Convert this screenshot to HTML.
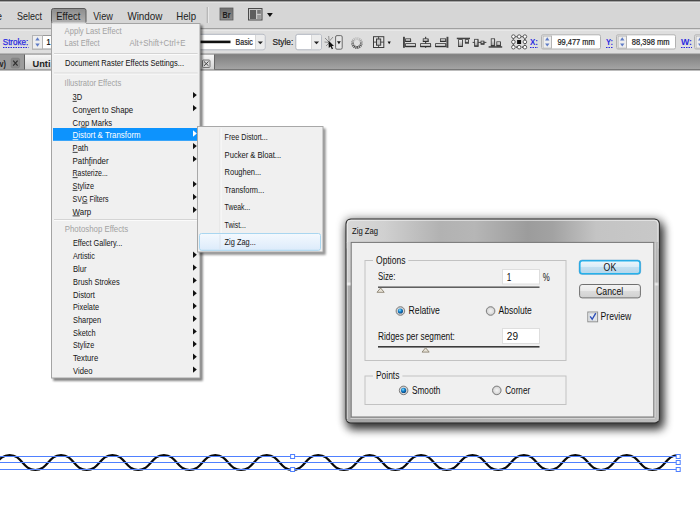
<!DOCTYPE html>
<html><head><meta charset="utf-8"><title>Zig Zag</title>
<style>html,body{margin:0;padding:0;background:#fff;overflow:hidden}svg{display:block}text{font-family:'Liberation Sans', sans-serif;white-space:pre}</style>
</head><body>
<svg width="700" height="506" viewBox="0 0 700 506">
<defs>
<linearGradient id="tabbar" x1="0" y1="0" x2="0" y2="1"><stop offset="0" stop-color="#7e7e7e"/><stop offset="1" stop-color="#a6a6a6"/></linearGradient>
<linearGradient id="acttab" x1="0" y1="0" x2="0" y2="1"><stop offset="0" stop-color="#d8d8d8"/><stop offset="1" stop-color="#cdcdcd"/></linearGradient>
<linearGradient id="effbtn" x1="0" y1="0" x2="0" y2="1"><stop offset="0" stop-color="#8c8c8c"/><stop offset="1" stop-color="#b4b4b4"/></linearGradient>
<linearGradient id="brbtn" x1="0" y1="0" x2="0" y2="1"><stop offset="0" stop-color="#6e6e6e"/><stop offset="1" stop-color="#8a8a8a"/></linearGradient>
<linearGradient id="title" x1="0" y1="0" x2="1" y2="0"><stop offset="0" stop-color="#d8d8d8"/><stop offset="0.12" stop-color="#d0d0d0"/><stop offset="0.3" stop-color="#b2b2b2"/><stop offset="0.41" stop-color="#b6b6b6"/><stop offset="0.58" stop-color="#9c9c9c"/><stop offset="0.66" stop-color="#a2a2a2"/><stop offset="0.8" stop-color="#c4c4c4"/><stop offset="1" stop-color="#c8c8c8"/></linearGradient>
<linearGradient id="okbtn" x1="0" y1="0" x2="0" y2="1"><stop offset="0" stop-color="#eef7fc"/><stop offset="0.5" stop-color="#d9ecf7"/><stop offset="0.5" stop-color="#c3e0f1"/><stop offset="1" stop-color="#b5d6ea"/></linearGradient>
<linearGradient id="cbtn" x1="0" y1="0" x2="0" y2="1"><stop offset="0" stop-color="#f4f4f4"/><stop offset="0.5" stop-color="#e9e9e9"/><stop offset="0.5" stop-color="#dcdcdc"/><stop offset="1" stop-color="#d0d0d0"/></linearGradient>
<linearGradient id="hl" x1="0" y1="0" x2="0" y2="1"><stop offset="0" stop-color="#f4f9fe"/><stop offset="1" stop-color="#dcebfb"/></linearGradient>
<radialGradient id="radio" cx="0.5" cy="0.5" r="0.5"><stop offset="0" stop-color="#f4f4f4"/><stop offset="0.7" stop-color="#dcdcdc"/><stop offset="1" stop-color="#b8b8b8"/></radialGradient>
<radialGradient id="dot" cx="0.4" cy="0.35" r="0.7"><stop offset="0" stop-color="#8fe0ff"/><stop offset="0.45" stop-color="#1583cc"/><stop offset="1" stop-color="#073f7a"/></radialGradient>
<filter id="b2" x="-20%" y="-20%" width="140%" height="140%"><feGaussianBlur stdDeviation="0.9"/></filter>
<filter id="b5" x="-20%" y="-20%" width="140%" height="140%"><feGaussianBlur stdDeviation="4.6"/></filter>
<linearGradient id="acttab2" x1="0" y1="0" x2="0" y2="1"><stop offset="0" stop-color="#f8f8f8"/><stop offset="1" stop-color="#d2d2d2"/></linearGradient><linearGradient id="ibox" x1="0" y1="0" x2="0" y2="1"><stop offset="0" stop-color="#f2f2f2"/><stop offset="1" stop-color="#9c9c9c"/></linearGradient><linearGradient id="lframe" x1="0" y1="0" x2="0" y2="1"><stop offset="0" stop-color="#d2d2d2"/><stop offset="0.222" stop-color="#cecece"/><stop offset="0.235" stop-color="#f6f6f6"/><stop offset="0.248" stop-color="#aeaeae"/><stop offset="1" stop-color="#acacac"/></linearGradient><linearGradient id="rframe" x1="0" y1="0" x2="0" y2="1"><stop offset="0" stop-color="#b8b8b8"/><stop offset="0.222" stop-color="#b0b0b0"/><stop offset="0.235" stop-color="#f0f0f0"/><stop offset="0.248" stop-color="#c2c2c2"/><stop offset="1" stop-color="#bcbcbc"/></linearGradient><linearGradient id="bframe" x1="0" y1="0" x2="1" y2="0"><stop offset="0" stop-color="#a4a4a4"/><stop offset="0.5" stop-color="#b4b4b4"/><stop offset="1" stop-color="#bcbcbc"/></linearGradient></defs>
<rect x="0" y="0" width="700" height="506" fill="#ffffff" />
<rect x="0" y="0" width="700" height="29" fill="#d6d6d6" />
<rect x="0" y="0" width="700" height="1" fill="#4a4a4a" />
<rect x="0" y="1" width="700" height="1" fill="#a4a4a4" />
<rect x="0" y="2" width="700" height="1" fill="#e2e2e2" />
<rect x="0" y="29" width="700" height="25" fill="#dedede" />
<rect x="0" y="28.4" width="700" height="1" fill="#7c7c7c" />
<rect x="0" y="29.4" width="700" height="1.2" fill="#eeeeee" />
<rect x="0" y="54" width="700" height="16" fill="url(#tabbar)" />
<rect x="0" y="53.5" width="700" height="1" fill="#8c8c8c" />
<rect x="0" y="69.4" width="700" height="1" fill="#5a5a5a" />
<rect x="0" y="54.5" width="24.5" height="15" fill="#9c9c9c" />
<text x="-0.4" y="66.5" font-size="9.4" fill="#222" font-weight="bold" textLength="6.4" lengthAdjust="spacingAndGlyphs" >v)</text>
<rect x="11.2" y="58.2" width="8.4" height="9.6" fill="#878787" rx="1.5" stroke="#7a7a7a" stroke-width="0.6"/>
<path d="M13.2 60.6 L17.6 65.6 M17.6 60.6 L13.2 65.6" stroke="#2e2e2e" stroke-width="1.2" fill="none"/>
<rect x="24.5" y="54.6" width="190" height="14.9" fill="url(#acttab2)" />
<rect x="214" y="54.5" width="1" height="15" fill="#666" />
<rect x="24" y="54.5" width="0.9" height="15" fill="#555" />
<text x="32.5" y="66.5" font-size="9.6" fill="#222" font-weight="bold" textLength="18" lengthAdjust="spacingAndGlyphs" >Unti</text>
<rect x="202.5" y="60" width="7.5" height="7.5" fill="#d8d8d8" stroke="#777" stroke-width="1" rx="1"/>
<path d="M204 61.5 L208.5 65.8 M208.5 61.5 L204 65.8" stroke="#444" stroke-width="1" fill="none"/>
<text x="-3.5" y="19.5" font-size="10.3" fill="#222" font-weight="normal" textLength="5.5" lengthAdjust="spacingAndGlyphs" >e</text>
<text x="17" y="19.5" font-size="10.3" fill="#222" font-weight="normal" textLength="25" lengthAdjust="spacingAndGlyphs" >Select</text>
<rect x="51.5" y="8.5" width="34.5" height="15" fill="url(#effbtn)" stroke="#5a5a5a" stroke-width="1" rx="2"/>
<text x="56.3" y="19.5" font-size="10.3" fill="#1a1a1a" font-weight="normal" textLength="24" lengthAdjust="spacingAndGlyphs" >Effect</text>
<text x="93.2" y="19.5" font-size="10.3" fill="#222" font-weight="normal" textLength="19.6" lengthAdjust="spacingAndGlyphs" >View</text>
<text x="127.4" y="19.5" font-size="10.3" fill="#222" font-weight="normal" textLength="35" lengthAdjust="spacingAndGlyphs" >Window</text>
<text x="176.2" y="19.5" font-size="10.3" fill="#222" font-weight="normal" textLength="19.8" lengthAdjust="spacingAndGlyphs" >Help</text>
<rect x="206.8" y="7" width="1" height="16" fill="#a2a2a2" />
<rect x="207.8" y="7" width="1" height="16" fill="#ececec" />
<rect x="220" y="8" width="13" height="12" fill="url(#brbtn)" stroke="#5c5c5c" stroke-width="0.8"/>
<text x="222.6" y="17.6" font-size="8.5" fill="#1c1c1c" font-weight="bold" textLength="8" lengthAdjust="spacingAndGlyphs" >Br</text>
<rect x="248.5" y="8.5" width="13.5" height="11.5" fill="#c9c9c9" stroke="#4a4a4a" stroke-width="1"/>
<rect x="250" y="10" width="6" height="9" fill="#5e5e5e" />
<rect x="257.2" y="10" width="3.6" height="3.8" fill="#777" />
<rect x="257.2" y="15" width="3.6" height="4" fill="#999" />
<path d="M267 13 L272.8 13 L269.9 17 Z" fill="#111"/>
<text x="2.8" y="44.7" font-size="8.4" fill="#2a2ae0" font-weight="normal" textLength="25.4" lengthAdjust="spacingAndGlyphs" stroke="#2a2ae0" stroke-width="0.25">Stroke:</text>
<line x1="3" y1="47.5" x2="28.5" y2="47.5" stroke="#2a2ae0" stroke-width="1" stroke-dasharray="1.5 1"/>
<rect x="32.5" y="35.5" width="30" height="13.5" fill="#ffffff" stroke="#9a9a9a" stroke-width="1"/>
<rect x="32.5" y="35.5" width="10" height="13.5" fill="#eeeeee" stroke="#b4b4b4" stroke-width="1"/>
<path d="M35.3 40.55 L39.7 40.55 L37.5 37.35 Z" fill="#5f7cc6"/>
<path d="M35.3 43.55 L39.7 43.55 L37.5 46.75 Z" fill="#5f7cc6"/>
<text x="46.6" y="44.6" font-size="9.5" fill="#222" font-weight="bold" textLength="4" lengthAdjust="spacingAndGlyphs" >1</text>
<rect x="196" y="34.3" width="69" height="15.5" fill="#ffffff" stroke="#b0b4be" stroke-width="1" rx="2"/>
<rect x="255.6" y="34.9" width="8.800000000000006" height="14.3" fill="#ececec" />
<rect x="255.2" y="34.9" width="0.8" height="14.3" fill="#d0d0d0" />
<path d="M257.7 41.449999999999996 L262.90000000000003 41.449999999999996 L260.3 44.25 Z" fill="#222"/>
<rect x="200" y="40.6" width="30.5" height="2.6" fill="#111" />
<text x="235.6" y="44.7" font-size="8.2" fill="#222" font-weight="normal" textLength="17.2" lengthAdjust="spacingAndGlyphs" stroke="#222" stroke-width="0.2">Basic</text>
<text x="272.6" y="44.7" font-size="8.4" fill="#222" font-weight="normal" textLength="20.6" lengthAdjust="spacingAndGlyphs" stroke="#222" stroke-width="0.2">Style:</text>
<rect x="295.8" y="34.3" width="25.599999999999966" height="15.5" fill="#ffffff" stroke="#b0b4be" stroke-width="1" rx="2"/>
<rect x="311.6" y="34.9" width="9.199999999999955" height="14.3" fill="#ececec" />
<rect x="311.20000000000005" y="34.9" width="0.8" height="14.3" fill="#d0d0d0" />
<path d="M313.9 41.449999999999996 L319.1 41.449999999999996 L316.5 44.25 Z" fill="#222"/>
<g stroke="#7a7a7a" stroke-width="0.8" fill="none"><path d="M325 38 L329 42 M333 37 L329.5 41 M326 46 L329 43 M328.7 36 L329 40 M324.5 42 L328 42.3"/></g>
<path d="M328.5 40.5 L334 46 L331.8 46 L333 48.8 L331.8 49.2 L330.6 46.5 L328.8 48 Z" fill="#111"/>
<rect x="335.6" y="35.6" width="6.6" height="13.6" fill="#e6e6e6" stroke="#6a6a6a" stroke-width="1" rx="1.4"/>
<path d="M337 41.2 L340.8 41.2 L338.9 44.3 Z" fill="#111"/>
<g transform="translate(356.9,43)"><line x1="3.04" y1="0.62" x2="5.78" y2="1.17" stroke="#6b6b6b" stroke-width="1.05"/><line x1="2.57" y1="1.73" x2="4.89" y2="3.30" stroke="#545454" stroke-width="1.05"/><line x1="1.71" y1="2.58" x2="3.26" y2="4.92" stroke="#424242" stroke-width="1.05"/><line x1="0.59" y1="3.04" x2="1.13" y2="5.79" stroke="#393939" stroke-width="1.05"/><line x1="-0.62" y1="3.04" x2="-1.17" y2="5.78" stroke="#393939" stroke-width="1.05"/><line x1="-1.73" y1="2.57" x2="-3.30" y2="4.89" stroke="#424242" stroke-width="1.05"/><line x1="-2.58" y1="1.71" x2="-4.92" y2="3.26" stroke="#545454" stroke-width="1.05"/><line x1="-3.04" y1="0.59" x2="-5.79" y2="1.13" stroke="#6b6b6b" stroke-width="1.05"/><line x1="-3.04" y1="-0.62" x2="-5.78" y2="-1.17" stroke="#868686" stroke-width="1.05"/><line x1="-2.57" y1="-1.73" x2="-4.89" y2="-3.30" stroke="#a0a0a0" stroke-width="1.05"/><line x1="-1.71" y1="-2.58" x2="-3.26" y2="-4.92" stroke="#b4b4b4" stroke-width="1.05"/><line x1="-0.59" y1="-3.04" x2="-1.13" y2="-5.79" stroke="#bebebe" stroke-width="1.05"/><line x1="0.62" y1="-3.04" x2="1.17" y2="-5.78" stroke="#bebebe" stroke-width="1.05"/><line x1="1.73" y1="-2.57" x2="3.30" y2="-4.89" stroke="#b3b3b3" stroke-width="1.05"/><line x1="2.58" y1="-1.71" x2="4.92" y2="-3.26" stroke="#9f9f9f" stroke-width="1.05"/><line x1="3.04" y1="-0.59" x2="5.79" y2="-1.13" stroke="#858585" stroke-width="1.05"/></g>
<rect x="373.5" y="36.7" width="10.3" height="10.8" fill="#e4e4e4" stroke="#3c3c3c" stroke-width="1"/>
<line x1="378.6" y1="36.7" x2="378.6" y2="47.5" stroke="#3c3c3c" stroke-width="0.9" />
<line x1="373.5" y1="42.1" x2="383.8" y2="42.1" stroke="#3c3c3c" stroke-width="0.9" />
<rect x="376.5" y="39" width="4.2" height="6.2" fill="#c6c6c6" stroke="#3c3c3c" stroke-width="1"/>
<path d="M387.6 41.5 L390.8 41.5 L389.2 44.2 Z" fill="#111"/>
<rect x="403" y="36.8" width="1.9" height="11" fill="#444" />
<rect x="405.6" y="38.8" width="5" height="2.6" fill="url(#ibox)" stroke="#3a3a3a" stroke-width="0.8"/>
<rect x="405.3" y="40.9" width="5.8" height="1.1" fill="#2e2e2e" />
<rect x="410.20000000000005" y="39.099999999999994" width="0.9" height="2.6" fill="#4a4a4a" />
<rect x="405.6" y="43.6" width="9.8" height="3" fill="url(#ibox)" stroke="#3a3a3a" stroke-width="0.8"/>
<rect x="405.3" y="46.1" width="10.600000000000001" height="1.1" fill="#2e2e2e" />
<rect x="415.00000000000006" y="43.9" width="0.9" height="3" fill="#4a4a4a" />
<rect x="425" y="36.8" width="1.2" height="11" fill="#444" />
<rect x="423.2" y="38.8" width="4.9" height="2.6" fill="url(#ibox)" stroke="#3a3a3a" stroke-width="0.8"/>
<rect x="422.9" y="40.9" width="5.7" height="1.1" fill="#2e2e2e" />
<rect x="427.7" y="39.099999999999994" width="0.9" height="2.6" fill="#4a4a4a" />
<rect x="420.6" y="43.6" width="10" height="3" fill="url(#ibox)" stroke="#3a3a3a" stroke-width="0.8"/>
<rect x="420.3" y="46.1" width="10.8" height="1.1" fill="#2e2e2e" />
<rect x="430.20000000000005" y="43.9" width="0.9" height="3" fill="#4a4a4a" />
<rect x="446.5" y="36.8" width="1.9" height="11" fill="#444" />
<rect x="440.4" y="38.8" width="5.3" height="2.6" fill="url(#ibox)" stroke="#3a3a3a" stroke-width="0.8"/>
<rect x="440.09999999999997" y="40.9" width="6.1" height="1.1" fill="#2e2e2e" />
<rect x="445.3" y="39.099999999999994" width="0.9" height="2.6" fill="#4a4a4a" />
<rect x="435.6" y="43.6" width="10.2" height="3" fill="url(#ibox)" stroke="#3a3a3a" stroke-width="0.8"/>
<rect x="435.3" y="46.1" width="11.0" height="1.1" fill="#2e2e2e" />
<rect x="445.40000000000003" y="43.9" width="0.9" height="3" fill="#4a4a4a" />
<rect x="456.8" y="37.7" width="13.2" height="1.5" fill="#444" />
<rect x="458.6" y="39.6" width="3.8" height="6.8" fill="url(#ibox)" stroke="#3a3a3a" stroke-width="0.8"/>
<rect x="458.3" y="45.9" width="4.6" height="1.1" fill="#2e2e2e" />
<rect x="462.00000000000006" y="39.9" width="0.9" height="6.8" fill="#4a4a4a" />
<rect x="465.3" y="39.6" width="3.2" height="3.3" fill="url(#ibox)" stroke="#3a3a3a" stroke-width="0.8"/>
<rect x="465.0" y="42.4" width="4.0" height="1.1" fill="#2e2e2e" />
<rect x="468.1" y="39.9" width="0.9" height="3.3" fill="#4a4a4a" />
<rect x="472.6" y="41.9" width="13.8" height="1.0" fill="#444" />
<rect x="474.6" y="39.3" width="3.4" height="6.8" fill="url(#ibox)" stroke="#3a3a3a" stroke-width="0.8"/>
<rect x="474.3" y="45.599999999999994" width="4.2" height="1.1" fill="#2e2e2e" />
<rect x="477.6" y="39.599999999999994" width="0.9" height="6.8" fill="#4a4a4a" />
<rect x="481" y="41.1" width="2.9" height="2.9" fill="url(#ibox)" stroke="#3a3a3a" stroke-width="0.8"/>
<rect x="480.7" y="43.5" width="3.7" height="1.1" fill="#2e2e2e" />
<rect x="483.5" y="41.4" width="0.9" height="2.9" fill="#4a4a4a" />
<rect x="488.6" y="46.2" width="13.6" height="1.5" fill="#444" />
<rect x="491.2" y="38.8" width="3.4" height="7" fill="url(#ibox)" stroke="#3a3a3a" stroke-width="0.8"/>
<rect x="490.9" y="45.3" width="4.2" height="1.1" fill="#2e2e2e" />
<rect x="494.2" y="39.099999999999994" width="0.9" height="7" fill="#4a4a4a" />
<rect x="496.8" y="41.8" width="3.6" height="4" fill="url(#ibox)" stroke="#3a3a3a" stroke-width="0.8"/>
<rect x="496.5" y="45.3" width="4.4" height="1.1" fill="#2e2e2e" />
<rect x="500.00000000000006" y="42.099999999999994" width="0.9" height="4" fill="#4a4a4a" />
<rect x="513.4" y="36.6" width="11.5" height="10.6" fill="none" stroke="#3a3a3a" stroke-width="1.3" stroke-dasharray="1.2 0.8"/>
<circle cx="513.4" cy="36.6" r="1.8" fill="#fff" stroke="#3a3a3a" stroke-width="0.8"/>
<circle cx="513.4" cy="41.9" r="1.8" fill="#fff" stroke="#3a3a3a" stroke-width="0.8"/>
<circle cx="513.4" cy="47.2" r="1.8" fill="#fff" stroke="#3a3a3a" stroke-width="0.8"/>
<circle cx="519.15" cy="36.6" r="1.8" fill="#fff" stroke="#3a3a3a" stroke-width="0.8"/>
<circle cx="519.15" cy="47.2" r="1.8" fill="#fff" stroke="#3a3a3a" stroke-width="0.8"/>
<circle cx="524.9" cy="36.6" r="1.8" fill="#fff" stroke="#3a3a3a" stroke-width="0.8"/>
<circle cx="524.9" cy="41.9" r="1.8" fill="#fff" stroke="#3a3a3a" stroke-width="0.8"/>
<circle cx="524.9" cy="47.2" r="1.8" fill="#fff" stroke="#3a3a3a" stroke-width="0.8"/>
<rect x="517.1" y="40" width="4" height="4" fill="#111" />
<text x="530" y="44.8" font-size="8.2" fill="#2a2ae0" font-weight="bold" textLength="8" lengthAdjust="spacingAndGlyphs" >X:</text>
<line x1="530" y1="47.5" x2="538" y2="47.5" stroke="#2a2ae0" stroke-width="1" stroke-dasharray="1.5 1"/>
<rect x="541.5" y="34.8" width="59" height="14.2" fill="#fff" stroke="#b2b2b2" stroke-width="1" rx="1.5"/>
<rect x="543.0" y="36.0" width="8.5" height="12.2" fill="#eeeeee" stroke="#b4b4b4" stroke-width="1"/>
<path d="M545.05 40.4 L549.45 40.4 L547.25 37.2 Z" fill="#5f7cc6"/>
<path d="M545.05 43.4 L549.45 43.4 L547.25 46.6 Z" fill="#5f7cc6"/>
<text x="557.4" y="44.8" font-size="8.2" fill="#222" font-weight="normal" textLength="37.4" lengthAdjust="spacingAndGlyphs" stroke="#222" stroke-width="0.2">99,477 mm</text>
<text x="606" y="44.8" font-size="8.2" fill="#2a2ae0" font-weight="bold" textLength="7" lengthAdjust="spacingAndGlyphs" >Y:</text>
<line x1="606" y1="47.5" x2="613" y2="47.5" stroke="#2a2ae0" stroke-width="1" stroke-dasharray="1.5 1"/>
<rect x="616.5" y="34.8" width="59" height="14.2" fill="#fff" stroke="#b2b2b2" stroke-width="1" rx="1.5"/>
<rect x="618.0" y="36.0" width="8.5" height="12.2" fill="#eeeeee" stroke="#b4b4b4" stroke-width="1"/>
<path d="M620.05 40.4 L624.45 40.4 L622.25 37.2 Z" fill="#5f7cc6"/>
<path d="M620.05 43.4 L624.45 43.4 L622.25 46.6 Z" fill="#5f7cc6"/>
<text x="631.8" y="44.8" font-size="8.2" fill="#222" font-weight="normal" textLength="37.8" lengthAdjust="spacingAndGlyphs" stroke="#222" stroke-width="0.2">88,398 mm</text>
<text x="681" y="44.8" font-size="8.2" fill="#2a2ae0" font-weight="bold" textLength="11" lengthAdjust="spacingAndGlyphs" >W:</text>
<line x1="681" y1="47.5" x2="692" y2="47.5" stroke="#2a2ae0" stroke-width="1" stroke-dasharray="1.5 1"/>
<rect x="694.5" y="34.8" width="20" height="14.2" fill="#fff" stroke="#b2b2b2" stroke-width="1" rx="1.5"/>
<rect x="696.0" y="36.0" width="8.5" height="12.2" fill="#eeeeee" stroke="#b4b4b4" stroke-width="1"/>
<path d="M698.05 40.4 L702.45 40.4 L700.25 37.2 Z" fill="#5f7cc6"/>
<path d="M698.05 43.4 L702.45 43.4 L700.25 46.6 Z" fill="#5f7cc6"/>
<path d="M-41.83 455.10 C-28.97 455.10 -28.97 470.00 -16.11 470.00 C-3.26 470.00 -3.26 455.10 9.60 455.10 C22.46 455.10 22.46 470.00 35.31 470.00 C48.17 470.00 48.17 455.10 61.03 455.10 C73.89 455.10 73.89 470.00 86.75 470.00 C99.60 470.00 99.60 455.10 112.46 455.10 C125.32 455.10 125.32 470.00 138.18 470.00 C151.03 470.00 151.03 455.10 163.89 455.10 C176.75 455.10 176.75 470.00 189.61 470.00 C202.46 470.00 202.46 455.10 215.32 455.10 C228.18 455.10 228.18 470.00 241.04 470.00 C253.89 470.00 253.89 455.10 266.75 455.10 C279.61 455.10 279.61 470.00 292.46 470.00 C305.32 470.00 305.32 455.10 318.18 455.10 C331.04 455.10 331.04 470.00 343.89 470.00 C356.75 470.00 356.75 455.10 369.61 455.10 C382.47 455.10 382.47 470.00 395.32 470.00 C408.18 470.00 408.18 455.10 421.04 455.10 C433.90 455.10 433.90 470.00 446.75 470.00 C459.61 470.00 459.61 455.10 472.47 455.10 C485.33 455.10 485.33 470.00 498.18 470.00 C511.04 470.00 511.04 455.10 523.90 455.10 C536.76 455.10 536.76 470.00 549.61 470.00 C562.47 470.00 562.47 455.10 575.33 455.10 C588.19 455.10 588.19 470.00 601.04 470.00 C613.90 470.00 613.90 455.10 626.76 455.10 C639.62 455.10 639.62 470.00 652.47 470.00 C665.33 470.00 665.33 455.10 678.19 455.10" fill="none" stroke="#0a0a0a" stroke-width="2.15"/>
<line x1="0" y1="456.5" x2="678" y2="456.5" stroke="#4f80ff" stroke-width="1" />
<line x1="0" y1="462.5" x2="678" y2="462.5" stroke="#4f80ff" stroke-width="1" />
<line x1="0" y1="469.5" x2="678" y2="469.5" stroke="#4f80ff" stroke-width="1" />
<rect x="290.6" y="454.5" width="4" height="4" fill="#fff" stroke="#4f80ff" stroke-width="1"/>
<rect x="290.6" y="467.5" width="4" height="4" fill="#fff" stroke="#4f80ff" stroke-width="1"/>
<rect x="676.2" y="454.5" width="4" height="4" fill="#fff" stroke="#4f80ff" stroke-width="1"/>
<rect x="676.2" y="460.5" width="4" height="4" fill="#fff" stroke="#4f80ff" stroke-width="1"/>
<rect x="676.2" y="467.5" width="4" height="4" fill="#fff" stroke="#4f80ff" stroke-width="1"/>
<rect x="53.2" y="25.4" width="149.5" height="355.5" fill="#000" opacity="0.5" filter="url(#b2)"/>
<rect x="51.5" y="23.5" width="148.5" height="354.5" fill="#f0f0f0" stroke="#a4a4a4" stroke-width="1"/>
<rect x="52" y="22.5" width="34" height="1.5" fill="#e0e0e0" />
<text x="64.6" y="33.5" font-size="9" fill="#a2a2a2" font-weight="normal" textLength="57" lengthAdjust="spacingAndGlyphs" >Apply Last Effect</text>
<text x="64.6" y="46" font-size="9" fill="#a2a2a2" font-weight="normal" textLength="35" lengthAdjust="spacingAndGlyphs" >Last Effect</text>
<text x="129.6" y="46" font-size="9" fill="#a2a2a2" font-weight="normal" textLength="56" lengthAdjust="spacingAndGlyphs" >Alt+Shift+Ctrl+E</text>
<rect x="54" y="53" width="143.6" height="1" fill="#d4d4d4" />
<rect x="54" y="54" width="143.6" height="1" fill="#fbfbfb" />
<rect x="54" y="72.6" width="143.6" height="1" fill="#d4d4d4" />
<rect x="54" y="73.6" width="143.6" height="1" fill="#fbfbfb" />
<rect x="54" y="219" width="143.6" height="1" fill="#d4d4d4" />
<rect x="54" y="220" width="143.6" height="1" fill="#fbfbfb" />
<text x="65" y="66" font-size="9" fill="#111" font-weight="normal" textLength="119" lengthAdjust="spacingAndGlyphs" >Document Raster Effects Settings...</text>
<text x="64.6" y="85.6" font-size="9" fill="#a2a2a2" font-weight="normal" textLength="56.6" lengthAdjust="spacingAndGlyphs" >Illustrator Effects</text>
<rect x="53" y="128" width="146" height="12.8" fill="#0d93fd" />
<text x="72.6" y="99.9" font-size="9" fill="#151515" font-weight="normal" textLength="9.6" lengthAdjust="spacingAndGlyphs" >3D</text>
<rect x="72.6" y="100.9" width="4.18" height="0.8" fill="#151515" />
<path d="M193 91.9 L196.8 95.10000000000001 L193 98.30000000000001 Z" fill="#111"/>
<text x="72.6" y="112.9" font-size="9" fill="#151515" font-weight="normal" textLength="60.6" lengthAdjust="spacingAndGlyphs" >Convert to Shape</text>
<rect x="86.87" y="113.9" width="3.91" height="0.8" fill="#151515" />
<path d="M193 104.9 L196.8 108.10000000000001 L193 111.30000000000001 Z" fill="#111"/>
<text x="72.6" y="125.7" font-size="9" fill="#151515" font-weight="normal" textLength="39.6" lengthAdjust="spacingAndGlyphs" >Crop Marks</text>
<rect x="80.67" y="126.7" width="4.28" height="0.8" fill="#151515" />
<text x="72.6" y="138.3" font-size="9" fill="#fff" font-weight="normal" textLength="68" lengthAdjust="spacingAndGlyphs" >Distort &amp; Transform</text>
<rect x="72.6" y="139.3" width="5.7" height="0.8" fill="#fff" />
<path d="M193 130.3 L196.8 133.5 L193 136.7 Z" fill="#fff"/>
<text x="72.6" y="150.9" font-size="9" fill="#151515" font-weight="normal" textLength="15.6" lengthAdjust="spacingAndGlyphs" >Path</text>
<rect x="72.6" y="151.9" width="5.07" height="0.8" fill="#151515" />
<path d="M193 142.9 L196.8 146.1 L193 149.29999999999998 Z" fill="#111"/>
<text x="72.6" y="163.7" font-size="9" fill="#151515" font-weight="normal" textLength="36" lengthAdjust="spacingAndGlyphs" >Pathfinder</text>
<rect x="88.83" y="164.7" width="2.21" height="0.8" fill="#151515" />
<path d="M193 155.7 L196.8 158.89999999999998 L193 162.09999999999997 Z" fill="#111"/>
<text x="72.6" y="176.3" font-size="9" fill="#151515" font-weight="normal" textLength="35.2" lengthAdjust="spacingAndGlyphs" >Rasterize...</text>
<rect x="72.6" y="177.3" width="5.03" height="0.8" fill="#151515" />
<text x="72.6" y="188.9" font-size="9" fill="#151515" font-weight="normal" textLength="21.4" lengthAdjust="spacingAndGlyphs" >Stylize</text>
<rect x="72.6" y="189.9" width="4.86" height="0.8" fill="#151515" />
<path d="M193 180.9 L196.8 184.1 L193 187.29999999999998 Z" fill="#111"/>
<text x="72.6" y="201.7" font-size="9" fill="#151515" font-weight="normal" textLength="36" lengthAdjust="spacingAndGlyphs" >SVG Filters</text>
<rect x="81.99" y="202.7" width="5.49" height="0.8" fill="#151515" />
<path d="M193 193.7 L196.8 196.89999999999998 L193 200.09999999999997 Z" fill="#111"/>
<text x="72.6" y="214.5" font-size="9" fill="#151515" font-weight="normal" textLength="18.6" lengthAdjust="spacingAndGlyphs" >Warp</text>
<rect x="72.6" y="215.5" width="7.18" height="0.8" fill="#151515" />
<path d="M193 206.5 L196.8 209.7 L193 212.89999999999998 Z" fill="#111"/>
<text x="64.8" y="232.4" font-size="9" fill="#a2a2a2" font-weight="normal" textLength="63.4" lengthAdjust="spacingAndGlyphs" >Photoshop Effects</text>
<text x="73" y="246.20000000000002" font-size="9" fill="#151515" font-weight="normal" textLength="49.2" lengthAdjust="spacingAndGlyphs" >Effect Gallery...</text>
<text x="73" y="259.2" font-size="9" fill="#151515" font-weight="normal" textLength="21.8" lengthAdjust="spacingAndGlyphs" >Artistic</text>
<path d="M193 251.60000000000002 L196.8 254.8 L193 258.0 Z" fill="#111"/>
<text x="73" y="272.0" font-size="9" fill="#151515" font-weight="normal" textLength="13.6" lengthAdjust="spacingAndGlyphs" >Blur</text>
<path d="M193 264.40000000000003 L196.8 267.6 L193 270.8 Z" fill="#111"/>
<text x="73" y="284.79999999999995" font-size="9" fill="#151515" font-weight="normal" textLength="46.6" lengthAdjust="spacingAndGlyphs" >Brush Strokes</text>
<path d="M193 277.2 L196.8 280.4 L193 283.59999999999997 Z" fill="#111"/>
<text x="73" y="297.59999999999997" font-size="9" fill="#151515" font-weight="normal" textLength="22" lengthAdjust="spacingAndGlyphs" >Distort</text>
<path d="M193 290.0 L196.8 293.2 L193 296.4 Z" fill="#111"/>
<text x="73" y="310.4" font-size="9" fill="#151515" font-weight="normal" textLength="26" lengthAdjust="spacingAndGlyphs" >Pixelate</text>
<path d="M193 302.8 L196.8 306.0 L193 309.2 Z" fill="#111"/>
<text x="73" y="323.2" font-size="9" fill="#151515" font-weight="normal" textLength="28" lengthAdjust="spacingAndGlyphs" >Sharpen</text>
<path d="M193 315.6 L196.8 318.8 L193 322.0 Z" fill="#111"/>
<text x="73" y="335.79999999999995" font-size="9" fill="#151515" font-weight="normal" textLength="22.6" lengthAdjust="spacingAndGlyphs" >Sketch</text>
<path d="M193 328.2 L196.8 331.4 L193 334.59999999999997 Z" fill="#111"/>
<text x="73" y="348.4" font-size="9" fill="#151515" font-weight="normal" textLength="21.2" lengthAdjust="spacingAndGlyphs" >Stylize</text>
<path d="M193 340.8 L196.8 344.0 L193 347.2 Z" fill="#111"/>
<text x="73" y="361.2" font-size="9" fill="#151515" font-weight="normal" textLength="25.2" lengthAdjust="spacingAndGlyphs" >Texture</text>
<path d="M193 353.6 L196.8 356.8 L193 360.0 Z" fill="#111"/>
<text x="73" y="374.0" font-size="9" fill="#151515" font-weight="normal" textLength="19.4" lengthAdjust="spacingAndGlyphs" >Video</text>
<path d="M193 366.40000000000003 L196.8 369.6 L193 372.8 Z" fill="#111"/>
<rect x="199.2" y="128.4" width="126.5" height="126.5" fill="#000" opacity="0.42" filter="url(#b2)"/>
<rect x="197.5" y="126.5" width="125.5" height="125.5" fill="#f0f0f0" stroke="#a8a8a8" stroke-width="1"/>
<rect x="219.5" y="128.5" width="1" height="122" fill="#e0e0e0" />
<rect x="220.5" y="128.5" width="1" height="122" fill="#fcfcfc" />
<rect x="199.5" y="233.5" width="121" height="16.8" fill="url(#hl)" stroke="#a9d6f0" stroke-width="1" rx="2"/>
<rect x="219.5" y="234.5" width="1" height="15" fill="#dbe4ee" />
<text x="224.6" y="140.3" font-size="9" fill="#151515" font-weight="normal" textLength="43.2" lengthAdjust="spacingAndGlyphs" >Free Distort...</text>
<text x="224.6" y="157.7" font-size="9" fill="#151515" font-weight="normal" textLength="56.6" lengthAdjust="spacingAndGlyphs" >Pucker &amp; Bloat...</text>
<text x="224.6" y="175.1" font-size="9" fill="#151515" font-weight="normal" textLength="36.6" lengthAdjust="spacingAndGlyphs" >Roughen...</text>
<text x="224.6" y="192.5" font-size="9" fill="#151515" font-weight="normal" textLength="39.6" lengthAdjust="spacingAndGlyphs" >Transform...</text>
<text x="224.6" y="209.9" font-size="9" fill="#151515" font-weight="normal" textLength="25.6" lengthAdjust="spacingAndGlyphs" >Tweak...</text>
<text x="224.6" y="227.5" font-size="9" fill="#151515" font-weight="normal" textLength="21.2" lengthAdjust="spacingAndGlyphs" >Twist...</text>
<text x="224.6" y="245.1" font-size="9" fill="#151515" font-weight="normal" textLength="31.2" lengthAdjust="spacingAndGlyphs" >Zig Zag...</text>
<rect x="344.5" y="217.5" width="317.29999999999995" height="208.0" fill="#000" opacity="0.3" filter="url(#b5)" rx="5"/>
<rect x="347.5" y="223.5" width="316.29999999999995" height="206.0" fill="#000" opacity="0.75" filter="url(#b5)" rx="5"/>
<rect x="346.1" y="219.1" width="313.09999999999997" height="203.8" fill="#b4b4b4" stroke="#303030" stroke-width="1.3" rx="4.6"/>
<path d="M346.7 242.5 L346.7 224.0 Q346.7 219.7 351.0 219.7 L654.3 219.7 Q658.5999999999999 219.7 658.5999999999999 224.0 L658.5999999999999 242.5 Z" fill="url(#title)"/>
<path d="M347.3 248.5 L347.3 224.0 Q347.3 220.3 351.0 220.3 L654.3 220.3 Q658.0 220.3 658.0 224.0 L658.0 248.5" fill="none" stroke="#f2f2f2" stroke-width="0.9" opacity="0.85"/>
<rect x="346.8" y="242.0" width="4.4" height="179.0" fill="url(#lframe)" />
<rect x="346.8" y="242.0" width="0.9" height="177.0" fill="#ececec" opacity="0.7"/>
<rect x="654.1999999999999" y="242.0" width="4.3" height="179.0" fill="url(#rframe)" />
<rect x="654.4" y="242.5" width="1" height="175.0" fill="#e6e6e6" />
<rect x="657.5999999999999" y="242.5" width="0.9" height="177.0" fill="#e0e0e0" opacity="0.7"/>
<rect x="349.5" y="417.3" width="306.29999999999995" height="4.9" fill="url(#bframe)" />
<rect x="350.5" y="417.9" width="304.29999999999995" height="1" fill="#e0e0e0" opacity="0.8"/>
<rect x="351.2" y="242.4" width="302.6" height="174.6" fill="#f0f0f0" stroke="#767676" stroke-width="1"/>
<text x="352" y="233.6" font-size="9" fill="#111" font-weight="normal" textLength="26" lengthAdjust="spacingAndGlyphs" >Zig Zag</text>
<rect x="365.0" y="260.5" width="201.0" height="100" fill="none" stroke="#c2c2c2" stroke-width="1"/>
<rect x="366.0" y="261.5" width="201.0" height="100" fill="none" stroke="#fdfdfd" stroke-width="1" opacity="0.0"/>
<rect x="373" y="258" width="35.4" height="5" fill="#f0f0f0" />
<text x="376" y="263.6" font-size="10" fill="#111" font-weight="normal" textLength="29.4" lengthAdjust="spacingAndGlyphs" >Options</text>
<rect x="365.0" y="376.0" width="201.0" height="28.5" fill="none" stroke="#c2c2c2" stroke-width="1"/>
<rect x="366.0" y="377.0" width="201.0" height="28.5" fill="none" stroke="#fdfdfd" stroke-width="1" opacity="0.0"/>
<rect x="373" y="373.5" width="29.4" height="5" fill="#f0f0f0" />
<text x="376" y="379.1" font-size="10" fill="#111" font-weight="normal" textLength="23.4" lengthAdjust="spacingAndGlyphs" >Points</text>
<text x="378" y="279.8" font-size="10" fill="#111" font-weight="normal" textLength="17.4" lengthAdjust="spacingAndGlyphs" >Size:</text>
<rect x="502.5" y="269.5" width="37" height="14.5" fill="#fff" stroke="#dedede" stroke-width="1"/>
<text x="506.8" y="280.6" font-size="10" fill="#111" font-weight="normal" textLength="4.6" lengthAdjust="spacingAndGlyphs" >1</text>
<text x="542.8" y="280.6" font-size="10" fill="#111" font-weight="normal" textLength="7" lengthAdjust="spacingAndGlyphs" >%</text>
<rect x="378" y="286.6" width="161.5" height="1.1" fill="#222" />
<path d="M377 292.3 L380.6 288 L384.2 292.3 Z" fill="#e9e4d8" stroke="#8a8272" stroke-width="0.9"/>
<circle cx="400.4" cy="311" r="4.3" fill="url(#radio)" stroke="#808080" stroke-width="1"/>
<circle cx="400.4" cy="311" r="2.6" fill="url(#dot)"/>
<text x="408.6" y="314.2" font-size="10" fill="#111" font-weight="normal" textLength="31.2" lengthAdjust="spacingAndGlyphs" >Relative</text>
<circle cx="490.6" cy="311" r="4.3" fill="url(#radio)" stroke="#808080" stroke-width="1"/>
<text x="498.6" y="314.2" font-size="10" fill="#111" font-weight="normal" textLength="33.2" lengthAdjust="spacingAndGlyphs" >Absolute</text>
<text x="378" y="339.6" font-size="10" fill="#111" font-weight="normal" textLength="76.8" lengthAdjust="spacingAndGlyphs" >Ridges per segment:</text>
<rect x="502.5" y="328.5" width="37" height="15" fill="#fff" stroke="#dedede" stroke-width="1"/>
<text x="506.8" y="340" font-size="10" fill="#111" font-weight="normal" textLength="11.2" lengthAdjust="spacingAndGlyphs" >29</text>
<rect x="378" y="346" width="161.5" height="1.6" fill="#3c3c3c" />
<path d="M422 352.1 L425.6 347.8 L429.2 352.1 Z" fill="#e9e4d8" stroke="#8a8272" stroke-width="0.9"/>
<circle cx="403.6" cy="390.4" r="4.3" fill="url(#radio)" stroke="#808080" stroke-width="1"/>
<circle cx="403.6" cy="390.4" r="2.6" fill="url(#dot)"/>
<text x="412" y="393.8" font-size="10" fill="#111" font-weight="normal" textLength="28.4" lengthAdjust="spacingAndGlyphs" >Smooth</text>
<circle cx="496.8" cy="390.4" r="4.3" fill="url(#radio)" stroke="#808080" stroke-width="1"/>
<text x="505.2" y="393.8" font-size="10" fill="#111" font-weight="normal" textLength="25" lengthAdjust="spacingAndGlyphs" >Corner</text>
<rect x="579.8" y="260.7" width="60.2" height="13" fill="url(#okbtn)" stroke="#25b4ee" stroke-width="1.6" rx="2.5"/>
<rect x="579.1" y="260" width="61.6" height="14.4" fill="none" stroke="#3c8fc4" stroke-width="0.6" rx="3" opacity="0.7"/>
<text x="603.6" y="270.8" font-size="10" fill="#111" font-weight="normal" textLength="12.6" lengthAdjust="spacingAndGlyphs" >OK</text>
<rect x="579.6" y="284.5" width="60.8" height="13.4" fill="url(#cbtn)" stroke="#707070" stroke-width="1" rx="2.5"/>
<text x="596" y="294.8" font-size="10" fill="#111" font-weight="normal" textLength="27.2" lengthAdjust="spacingAndGlyphs" >Cancel</text>
<rect x="587.8" y="312" width="9.8" height="9.8" fill="#f4f4f4" stroke="#8e8f8f" stroke-width="1"/>
<rect x="589.3" y="313.5" width="6.8" height="6.8" fill="#e6eaee" stroke="#cfd4da" stroke-width="0.8"/>
<path d="M590.2 316.4 L592.2 319.3 L595.8 313.2" fill="none" stroke="#2f4fb8" stroke-width="1.4"/>
<text x="600.6" y="320.2" font-size="10" fill="#111" font-weight="normal" textLength="30.6" lengthAdjust="spacingAndGlyphs" >Preview</text>
</svg>
</body></html>
